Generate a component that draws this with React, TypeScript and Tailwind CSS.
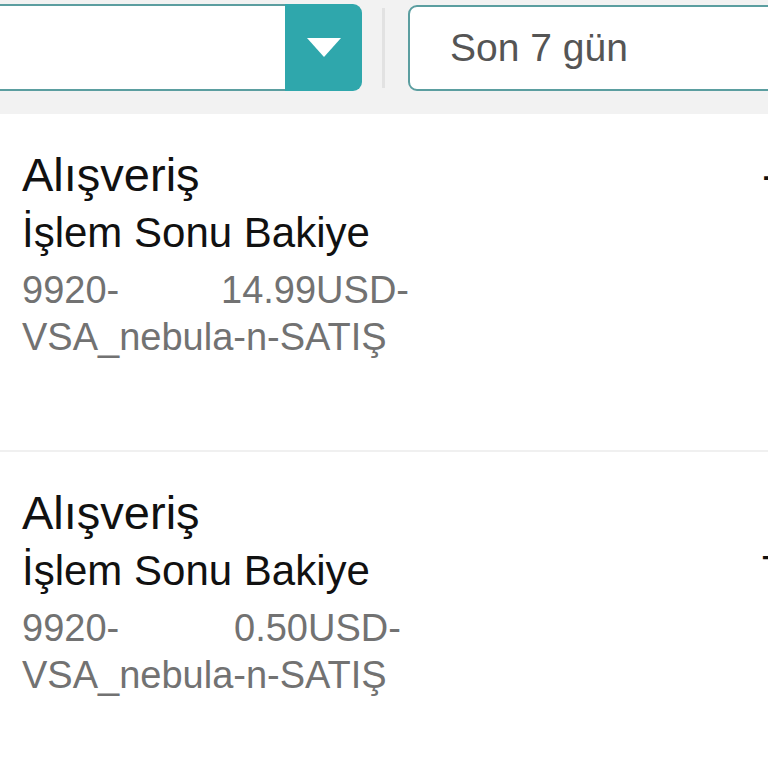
import React from "react";

const font = { fontFamily: '"Liberation Sans", Arial, sans-serif' };

function Item({
  gap,
  amount,
  rightLine1,
  rightLine2,
}: {
  gap: string;
  amount: string;
  rightLine1: string;
  rightLine2: string;
}) {
  return (
    <div className="flex border-b-2 border-[#f0f0f0] bg-white pl-[22px] pt-[32px] h-[338px]">
      <div className="w-[740px] shrink-0">
        <div className="text-[47px] leading-[58px] text-[#111]">Alışveriş</div>
        <div className="text-[42px] leading-[57px] text-[#111]">İşlem Sonu Bakiye</div>
        <div className="text-[38px] leading-[47px] text-[#727272] mt-[6px]">
          <span className={gap}>9920-</span>
          {amount}
          <br />
          VSA_nebula-n-SATIŞ
        </div>
      </div>
      <div className="whitespace-nowrap text-[#111]">
        <div className="text-[47px] leading-[58px]">{rightLine1}</div>
        <div className="text-[42px] leading-[57px]">{rightLine2}</div>
      </div>
    </div>
  );
}

export default function App() {
  return (
    <div className="w-[768px] h-[768px] overflow-hidden bg-white" style={font}>
      <div className="flex items-start bg-[#f2f2f2] pt-[4px] h-[114px]">
        <div className="flex w-[362px] h-[87px] shrink-0">
          <div className="flex-1 bg-white border-y-2 border-[#5b9ea0]" />
          <div className="w-[77px] bg-[#2fa7ac] rounded-r-[9px] flex items-center justify-center">
            <svg width="34" height="19" viewBox="0 0 34 19">
              <polygon points="0,0 34,0 17,19" fill="#ffffff" />
            </svg>
          </div>
        </div>
        <div className="ml-[20px] mt-[4px] w-[3px] h-[80px] bg-[#e2e2e2] shrink-0" />
        <div className="ml-[23px] mt-[1px] w-[420px] h-[86px] shrink-0 rounded-[9px] border-2 border-[#5b9ea0] bg-white flex items-center pl-[40px]">
          <span className="text-[39px] text-[#555]">Son 7 gün</span>
        </div>
      </div>
      <Item gap="inline-block w-[199px]" amount="14.99USD-" rightLine1="-14.99 USD" rightLine2="" />
      <Item gap="inline-block w-[212px]" amount="0.50USD-" rightLine1={"\u00a0"} rightLine2="TL" />
    </div>
  );
}
